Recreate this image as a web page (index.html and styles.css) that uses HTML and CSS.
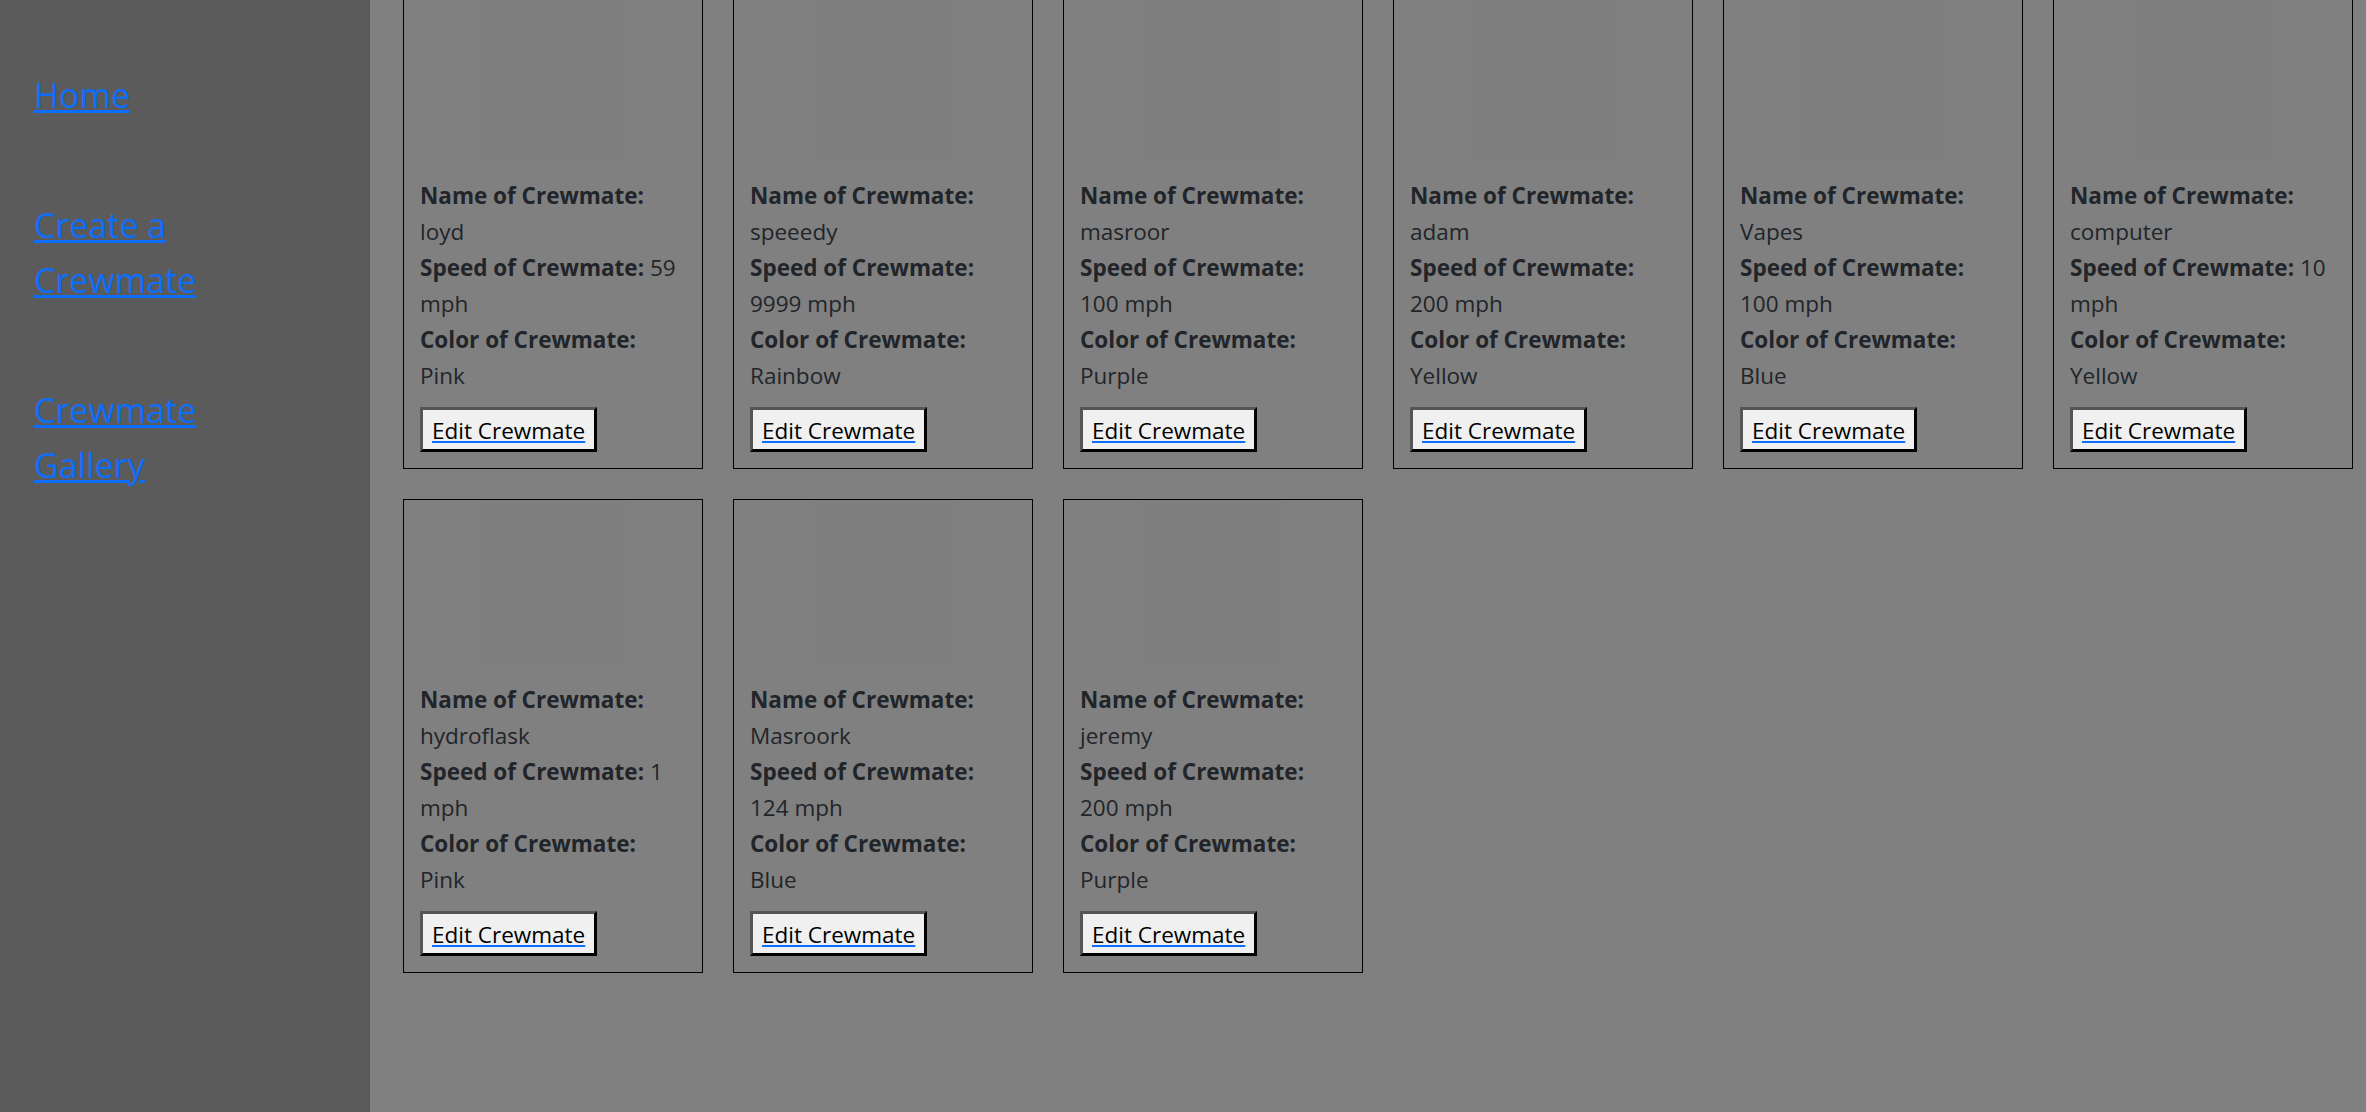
FILE: index.html
```html
<!DOCTYPE html>
<html lang="en">
<head>
<meta charset="utf-8">
<title>Crewmate Gallery</title>
<link rel="stylesheet" href="styles.css">
</head>
<body>
<div class="app">
  <nav class="sidebar">
    <a class="nav-link" href="#">Home</a>
    <a class="nav-link" href="#">Create a Crewmate</a>
    <a class="nav-link" href="#">Crewmate Gallery</a>
  </nav>
  <main class="gallery">
    <div class="card">
      <div class="photo"></div>
      <p><b>Name of Crewmate:</b> loyd</p>
      <p><b>Speed of Crewmate:</b> 59 mph</p>
      <p><b>Color of Crewmate:</b> Pink</p>
      <a class="edit-btn" href="#">Edit Crewmate</a>
    </div>
    <div class="card">
      <div class="photo"></div>
      <p><b>Name of Crewmate:</b> speeedy</p>
      <p><b>Speed of Crewmate:</b> 9999 mph</p>
      <p><b>Color of Crewmate:</b> Rainbow</p>
      <a class="edit-btn" href="#">Edit Crewmate</a>
    </div>
    <div class="card">
      <div class="photo"></div>
      <p><b>Name of Crewmate:</b> masroor</p>
      <p><b>Speed of Crewmate:</b> 100 mph</p>
      <p><b>Color of Crewmate:</b> Purple</p>
      <a class="edit-btn" href="#">Edit Crewmate</a>
    </div>
    <div class="card">
      <div class="photo"></div>
      <p><b>Name of Crewmate:</b> adam</p>
      <p><b>Speed of Crewmate:</b> 200 mph</p>
      <p><b>Color of Crewmate:</b> Yellow</p>
      <a class="edit-btn" href="#">Edit Crewmate</a>
    </div>
    <div class="card">
      <div class="photo"></div>
      <p><b>Name of Crewmate:</b> Vapes</p>
      <p><b>Speed of Crewmate:</b> 100 mph</p>
      <p><b>Color of Crewmate:</b> Blue</p>
      <a class="edit-btn" href="#">Edit Crewmate</a>
    </div>
    <div class="card">
      <div class="photo"></div>
      <p><b>Name of Crewmate:</b> computer</p>
      <p><b>Speed of Crewmate:</b> 10 mph</p>
      <p><b>Color of Crewmate:</b> Yellow</p>
      <a class="edit-btn" href="#">Edit Crewmate</a>
    </div>
    <div class="card">
      <div class="photo"></div>
      <p><b>Name of Crewmate:</b> hydroflask</p>
      <p><b>Speed of Crewmate:</b> 1 mph</p>
      <p><b>Color of Crewmate:</b> Pink</p>
      <a class="edit-btn" href="#">Edit Crewmate</a>
    </div>
    <div class="card">
      <div class="photo"></div>
      <p><b>Name of Crewmate:</b> Masroork</p>
      <p><b>Speed of Crewmate:</b> 124 mph</p>
      <p><b>Color of Crewmate:</b> Blue</p>
      <a class="edit-btn" href="#">Edit Crewmate</a>
    </div>
    <div class="card">
      <div class="photo"></div>
      <p><b>Name of Crewmate:</b> jeremy</p>
      <p><b>Speed of Crewmate:</b> 200 mph</p>
      <p><b>Color of Crewmate:</b> Purple</p>
      <a class="edit-btn" href="#">Edit Crewmate</a>
    </div>
  </main>
</div>
</body>
</html>
```

FILE: styles.css
```css
html, body {
  margin: 0;
  padding: 0;
  height: 100%;
  overflow: hidden;
}

body {
  font-family: "Open Sans", "Noto Sans", sans-serif;
  background: #808080;
  color: #212529;
}

.app {
  display: flex;
  height: 1112px;
}

.sidebar {
  width: 370px;
  flex: 0 0 370px;
  background: #5b5b5b;
  box-sizing: border-box;
  padding: 68px 0 0 34px;
  display: flex;
  flex-direction: column;
  align-items: flex-start;
  gap: 75px;
}

.nav-link {
  display: block;
  max-width: 250px;
  font-size: 34px;
  line-height: 55px;
  color: #0d6efd;
  text-decoration: underline;
}

.gallery {
  flex: 1;
  display: flex;
  flex-wrap: wrap;
  align-content: flex-start;
  gap: 30px;
  padding-left: 33px;
  margin-top: -5px;
}

.card {
  width: 300px;
  box-sizing: border-box;
  border: 1px solid #000;
  padding: 0 16px 16px 16px;
  display: flex;
  flex-direction: column;
  align-items: flex-start;
}

.photo {
  width: 144px;
  height: 167px;
  margin: 0 auto 15px auto;
  align-self: center;
  background: #7f7f7f;
}

.card p {
  margin: 0;
  font-size: 22.5px;
  line-height: 36px;
  width: 266px;
}

.card b {
  font-weight: 700;
}

.edit-btn {
  margin-top: 13px;
  display: inline-block;
  box-sizing: border-box;
  height: 45px;
  padding: 0 9px;
  line-height: 41px;
  font-size: 22.5px;
  color: #000;
  background: #f0f0f0;
  border-style: solid;
  border-width: 3px;
  border-color: #555555 #000000 #000000 #555555;
  text-decoration: underline;
  text-decoration-color: #0d6efd;
  text-underline-offset: 2px;
}
```
